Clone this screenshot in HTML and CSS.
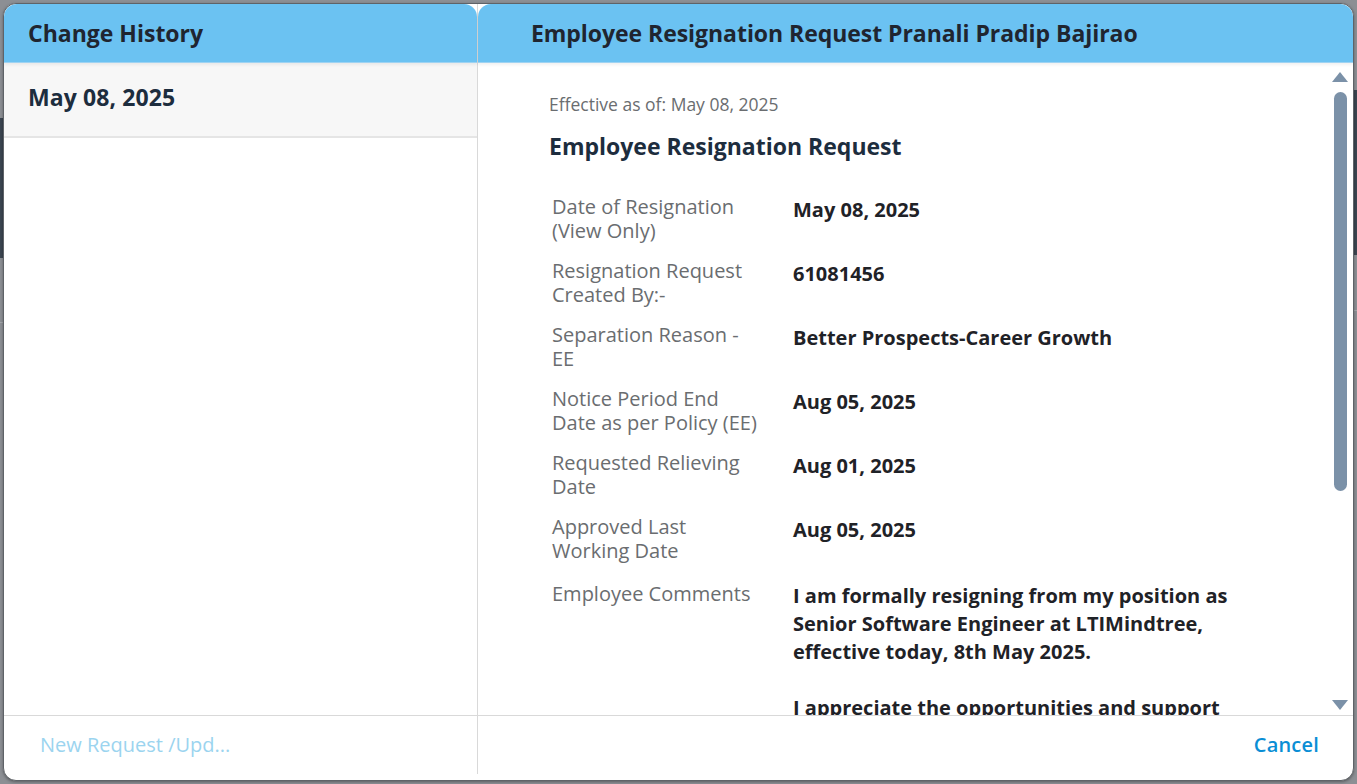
FILE: index.html
```html
<!DOCTYPE html>
<html lang="en">
<head>
<meta charset="utf-8">
<title>Change History</title>
<link rel="stylesheet" href="styles.css">
</head>
<body>
<div class="backdrop">
  <div class="bd-strip bd-left"></div>
  <div class="bd-strip bd-right"></div>
  <div class="bd-line bd-line-left"></div>
  <div class="bd-line bd-line-right"></div>
</div>

<div class="dialog">
  <section class="pane pane-history">
    <header class="pane-head head-left">
      <h2 class="head-title">Change History</h2>
    </header>
    <div class="pane-body history-body">
      <div class="history-item">May 08, 2025</div>
    </div>
    <footer class="pane-foot foot-left">
      <span class="link-disabled">New Request /Upd...</span>
    </footer>
  </section>

  <div class="divider"></div>

  <section class="pane pane-detail">
    <header class="pane-head head-right">
      <h2 class="head-title detail-title">Employee Resignation Request Pranali Pradip Bajirao</h2>
    </header>
    <div class="pane-body detail-body">
      <div class="detail-scroll">
        <div class="effective">Effective as of: May 08, 2025</div>
        <h3 class="section-title">Employee Resignation Request</h3>
        <div class="form">
          <div class="f-label">Date of Resignation
(View Only)</div>
          <div class="f-value">May 08, 2025</div>

          <div class="f-label">Resignation Request
Created By:-</div>
          <div class="f-value">61081456</div>

          <div class="f-label">Separation Reason -
EE</div>
          <div class="f-value">Better Prospects-Career Growth</div>

          <div class="f-label">Notice Period End
Date as per Policy (EE)</div>
          <div class="f-value">Aug 05, 2025</div>

          <div class="f-label">Requested Relieving
Date</div>
          <div class="f-value">Aug 01, 2025</div>

          <div class="f-label">Approved Last
Working Date</div>
          <div class="f-value">Aug 05, 2025</div>

          <div class="f-label f-last">Employee Comments</div>
          <div class="f-value f-last f-comments">I am formally resigning from my position as
Senior Software Engineer at LTIMindtree,
effective today, 8th May 2025.

I appreciate the opportunities and support</div>
        </div>
      </div>
      <div class="scrollbar">
        <span class="sb-arrow sb-up"></span>
        <span class="sb-thumb"></span>
        <span class="sb-arrow sb-down"></span>
      </div>
    </div>
    <footer class="pane-foot foot-right">
      <span class="link">Cancel</span>
    </footer>
  </section>
</div>
</body>
</html>
```

FILE: styles.css
```css
html, body {
  margin: 0;
  padding: 0;
  width: 1357px;
  height: 784px;
  overflow: hidden;
}

body {
  background: #8c8f94;
  font-family: "Open Sans", "Noto Sans", "Liberation Sans", sans-serif;
  color: #1d2d3e;
}

/* page behind the modal overlay */
.backdrop {
  position: absolute;
  inset: 0;
}
.bd-strip {
  position: absolute;
  background: #3b4550;
}
.bd-left {
  left: 0;
  top: 118px;
  width: 6px;
  height: 140px;
}
.bd-right {
  right: 0;
  top: 90px;
  width: 6px;
  height: 165px;
}
.bd-line {
  position: absolute;
  height: 1px;
  background: #a3a6aa;
}
.bd-line-left {
  left: 0;
  top: 322px;
  width: 6px;
}
.bd-line-right {
  right: 0;
  top: 310px;
  width: 6px;
}

/* modal */
.dialog {
  position: absolute;
  left: 3px;
  top: 3px;
  width: 1349px;
  height: 776px;
  border: 1px solid #5f6368;
  border-radius: 13px;
  background: #ffffff;
  overflow: hidden;
  display: grid;
  grid-template-columns: 473px 1px 1fr;
  box-shadow: 0 1px 3px rgba(0, 0, 0, 0.35);
}

.pane {
  display: grid;
  grid-template-rows: 59px 1fr 64px;
  min-height: 0;
}

.divider {
  background: #d9d9d9;
  margin-bottom: 6px;
}

.pane-head {
  background: #6bc2f2;
  border-radius: 13px 13px 0 0;
  border-bottom: 1px solid #9fd3f2;
  display: flex;
  align-items: center;
  position: relative;
  z-index: 1;
  box-shadow: 0 2px 3px rgba(0, 0, 0, 0.06);
}
.head-left {
  padding-left: 24px;
}
.head-right {
  padding-left: 53px;
}
.head-title {
  margin: 0;
  font-size: 23px;
  font-weight: 700;
  color: #1f2530;
  line-height: 30px;
}
.detail-title {
  letter-spacing: -0.05px;
}

.pane-body {
  min-height: 0;
  overflow: hidden;
  border-bottom: 1px solid #d9d9d9;
}

.history-item {
  background: #f7f7f7;
  border-bottom: 2px solid #e5e5e5;
  padding-left: 24px;
  padding-bottom: 6px;
  box-sizing: border-box;
  height: 75px;
  display: flex;
  align-items: center;
  font-size: 23px;
  font-weight: 700;
  letter-spacing: 0.1px;
  color: #1d2d3e;
}

.pane-foot {
  display: flex;
  align-items: center;
  font-size: 20px;
  padding-bottom: 7px;
}
.foot-left {
  padding-left: 36px;
}
.foot-right {
  justify-content: flex-end;
  padding-right: 34px;
}
.link-disabled {
  color: #9bd4ef;
}
.link {
  color: #0a8ed5;
  font-weight: 600;
  letter-spacing: 0.2px;
}

.detail-body {
  display: flex;
}
.detail-scroll {
  flex: 1;
  padding: 30px 0 0 71px;
  overflow: hidden;
}

.effective {
  font-size: 17.5px;
  line-height: 22px;
  color: #6a6d70;
}
.section-title {
  margin: 17px 0 0;
  font-size: 23px;
  line-height: 28px;
  font-weight: 700;
  color: #1d2d3e;
}

.form {
  display: grid;
  grid-template-columns: 241px 470px;
  row-gap: 16px;
  margin-top: 35px;
  padding-left: 3px;
}
.f-label {
  font-size: 20px;
  line-height: 24px;
  color: #6a6d70;
  white-space: pre-line;
}
.f-value {
  font-size: 20px;
  line-height: 28px;
  font-weight: 700;
  color: #1f2227;
  padding-top: 1px;
  white-space: pre-line;
}
.f-last {
  margin-top: 2px;
}
.f-label.f-last {
  padding-top: 1px;
}

.scrollbar {
  width: 20px;
  flex: none;
  display: flex;
  flex-direction: column;
  align-items: center;
  padding: 9px 3px 5px 0;
}
.sb-arrow {
  width: 0;
  height: 0;
  border-left: 8px solid transparent;
  border-right: 8px solid transparent;
}
.sb-up {
  border-bottom: 10px solid #7b91a8;
}
.sb-down {
  border-top: 10px solid #7b91a8;
  margin-top: auto;
}
.sb-thumb {
  width: 13px;
  height: 399px;
  margin-top: 10px;
  border-radius: 7px;
  background: #7b91a8;
}
```
